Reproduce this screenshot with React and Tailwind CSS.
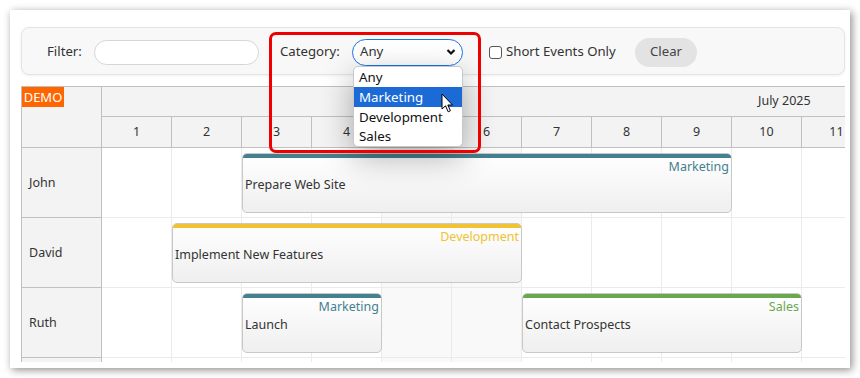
import React from "react";

const FONT = { fontFamily: '"Segoe UI", "Noto Sans", "Open Sans", sans-serif' };

const days = [1, 2, 3, 4, 5, 6, 7, 8, 9, 10, 11];
const rows = ["John", "David", "Ruth", ""];

const events = [
  { row: 0, start: 2, days: 7, title: "Prepare Web Site", label: "Marketing", color: "#45808f" },
  { row: 1, start: 1, days: 5, title: "Implement New Features", label: "Development", color: "#f1c232" },
  { row: 2, start: 2, days: 2, title: "Launch", label: "Marketing", color: "#45808f" },
  { row: 2, start: 6, days: 4, title: "Contact Prospects", label: "Sales", color: "#6aa84f" },
];

function Event({ e }) {
  return (
    <div
      className="absolute flex flex-col overflow-hidden rounded-[5px] border border-[#c8c8c8] bg-gradient-to-b from-white to-[#efefef]"
      style={{ left: e.start * 70, width: e.days * 70, top: e.row * 70 + 5, height: 60 }}
    >
      <div className="h-[4px] shrink-0" style={{ background: e.color }} />
      <div className="pr-[2px] text-right text-[12.5px] leading-[18px]" style={{ color: e.color }}>
        {e.label}
      </div>
      <div className="pl-[2px] text-[12.5px] leading-[17px] text-[#333]">{e.title}</div>
    </div>
  );
}

export default function App() {
  return (
    <div className="relative h-[378px] w-[860px] overflow-hidden bg-white text-[#333]" style={FONT}>
      <div className="ml-[10px] mt-[10px] h-[358px] w-[840px] bg-white pl-[11px] pt-[17px] shadow-[2px_2px_8px_rgba(0,0,0,0.45)]">
        {/* Toolbar */}
        <div className="flex h-[48px] w-[824px] items-center rounded-[8px] border border-[#e4e4e4] bg-[#f8f8f8] pl-[25px] pt-[2px] text-[13.2px] shadow-[0_1px_3px_rgba(0,0,0,0.06)]">
          <span className="w-[47px]">Filter:</span>
          <div className="h-[25px] w-[165px] rounded-full border border-[#d6d6d6] bg-white" />
          <span className="ml-[21px] w-[72px]">Category:</span>
          <div className="flex h-[27px] w-[111px] items-center justify-between rounded-full border border-[#1a73e8] bg-white pl-[7px] pr-[6px]">
            <span>Any</span>
            <svg width="10" height="8" viewBox="0 0 10 8">
              <polyline points="1.5,2 5,5.5 8.5,2" fill="none" stroke="#111" strokeWidth="2.2" />
            </svg>
          </div>
          <div className="ml-[26px] h-[13px] w-[13px] rounded-[3px] border border-[#555] bg-white" />
          <span className="ml-[4px] w-[129px]">Short Events Only</span>
          <div className="flex h-[29px] w-[62px] items-center justify-center rounded-full bg-[#e3e3e3] text-[#444]">
            Clear
          </div>
        </div>

        {/* Scheduler */}
        <div className="mt-[11px] flex h-[276px] w-[824px] overflow-hidden border-l border-t border-[#c0c0c0] text-[12.5px]">
          <div className="w-[80px] shrink-0 border-r border-[#c0c0c0] bg-[#f3f3f3]">
            <div className="h-[61px] border-b border-[#c0c0c0]">
              <span className="inline-block h-[20px] w-[42px] bg-[#ff6600] text-center text-[13px] leading-[20px] text-white">DEMO</span>
            </div>
            {rows.map((r, i) => (
              <div key={i} className="flex h-[70px] items-center border-b border-[#c0c0c0] pl-[7px] pt-[2px]">
                {r}
              </div>
            ))}
          </div>
          <div className="min-w-0 flex-1 overflow-hidden">
            <div className="flex h-[30px] items-center border-b border-[#c0c0c0] bg-[#f3f3f3] pl-[656px]">
              <span className="whitespace-nowrap">July 2025</span>
            </div>
            <div className="flex h-[31px] border-b border-[#c0c0c0] bg-[#f3f3f3]">
              {days.map((d) => (
                <div key={d} className="flex w-[70px] shrink-0 items-center justify-center border-r border-[#c0c0c0]">
                  {d}
                </div>
              ))}
            </div>
            <div className="relative">
              {rows.map((r, i) => (
                <div key={i} className="flex h-[70px] border-b border-[#ebebeb]">
                  {days.map((d) => (
                    <div
                      key={d}
                      className={`w-[70px] shrink-0 border-r border-[#ebebeb] ${d === 5 || d === 6 ? "bg-[#f9f9f9]" : "bg-white"}`}
                    />
                  ))}
                </div>
              ))}
              {events.map((e, i) => (
                <Event key={i} e={e} />
              ))}
            </div>
          </div>
        </div>
      </div>

      {/* Open dropdown list */}
      <div className="absolute left-[353px] top-[66px] w-[110px] overflow-hidden rounded-[5px] border border-[#c8c8c8] bg-white text-[13.3px] text-[#111] shadow-[0_10px_32px_rgba(0,0,0,0.32)]">
        <div className="h-[20px] pl-[5px] leading-[20px]">Any</div>
        <div className="h-[20px] bg-[#1b6ad6] pl-[5px] leading-[20px] text-white">Marketing</div>
        <div className="h-[20px] pl-[5px] leading-[20px]">Development</div>
        <div className="h-[19px] pl-[5px] leading-[19px]">Sales</div>
      </div>

      {/* Mouse cursor */}
      <svg className="absolute left-[441px] top-[93px]" width="14" height="21" viewBox="0 0 14 21">
        <path d="M1 1 L1 16 L4.5 12.8 L7.2 18.8 L9.4 17.8 L6.8 12 L11.5 12 Z" fill="#fff" stroke="#000" strokeWidth="1" strokeLinejoin="round" />
      </svg>

      {/* Red annotation box */}
      <div className="pointer-events-none absolute left-[269px] top-[32px] h-[121px] w-[212px] rounded-[7px] border-[3px] border-[#ee0000]" />
    </div>
  );
}
